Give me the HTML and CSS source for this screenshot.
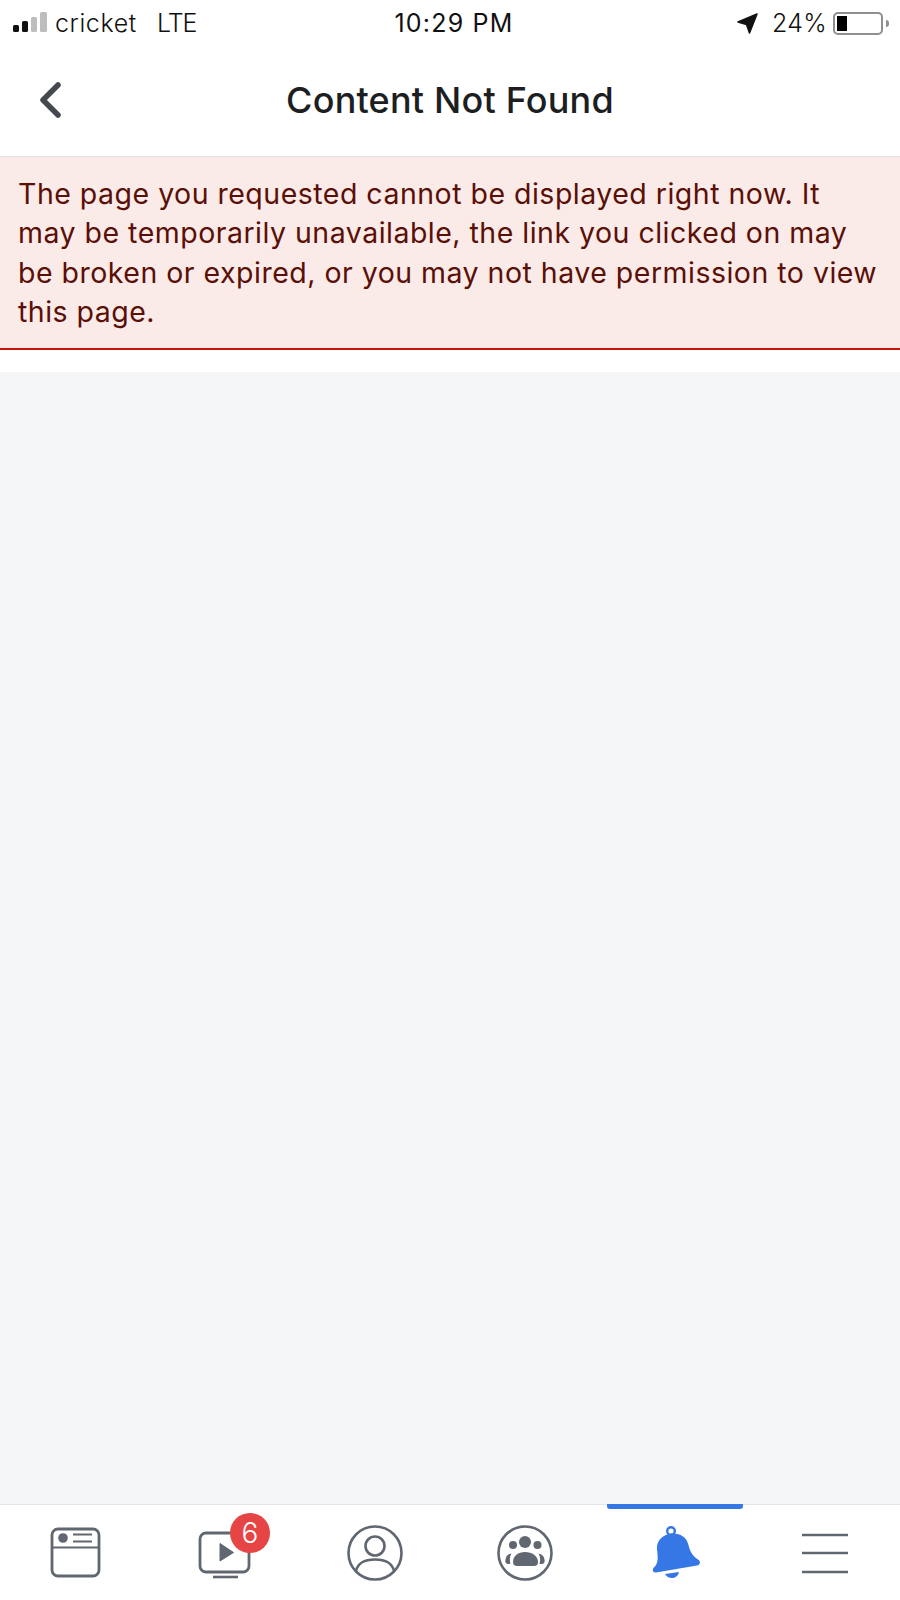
FILE: index.html
```html
<!DOCTYPE html>
<html>
<head>
    <meta http-equiv="Content-Type" content="text/html; charset=UTF-8">
    <title>Content Not Found</title>
    <link rel="stylesheet" href="styles.css">
</head>

<body>
<div id="page">
    <div class="status">
        <div class="status-left">
            <svg class="signal" width="36" height="26" viewBox="0 0 36 26">
                <rect x="0" y="15" width="6" height="7" rx="1.5" fill="#111"/>
                <rect x="9" y="11" width="6" height="11" rx="1.5" fill="#111"/>
                <rect x="18" y="7" width="6" height="15" rx="1.5" fill="#bdbdbd"/>
                <rect x="27" y="2" width="7" height="20" rx="1.5" fill="#bdbdbd"/>
            </svg>
            <span class="carrier">cricket</span>
            <span class="network">LTE</span>
        </div>
        <div class="clock">10:29 PM</div>
        <div class="status-right">
            <svg class="arrow" width="21" height="21" viewBox="0 0 21 21">
                <path d="M20 1 L1 9 L9.500 11.500 L12.500 20 Z" fill="#111" stroke="#111" stroke-width="1.500" stroke-linejoin="round"/>
            </svg>
            <span class="percent">24%</span>
            <div class="battery"><div class="battery-fill"></div></div>
            <div class="battery-nub"></div>
        </div>
    </div>

    <div class="nav">
        <a class="back">
            <svg width="24" height="36" viewBox="0 0 24 36">
                <path d="M20 3 L5 18 L20 33" fill="none" stroke="#444950" stroke-width="5.500" stroke-linecap="round" stroke-linejoin="round"/>
            </svg>
        </a>
        <div class="title">Content Not Found</div>
    </div>

    <div class="error">The page you requested cannot be displayed right now. It may be temporarily unavailable, the link you clicked on may be broken or expired, or you may not have permission to view this page.</div>

    <div class="gap"></div>
    <div class="content"></div>

    <div class="tabs">
        <div class="tab">
            <svg width="60" height="60" viewBox="0 0 60 60">
                <rect x="7" y="6" width="47" height="47" rx="6" fill="none" stroke="#606770" stroke-width="2.800"/>
                <path d="M7 24.500 H54" stroke="#606770" stroke-width="2.200"/>
                <circle cx="18" cy="15" r="4.800" fill="#606770"/>
                <path d="M28 11.500 H47 M28 18.500 H47" stroke="#606770" stroke-width="2.200"/>
            </svg>
        </div>
        <div class="tab">
            <svg width="60" height="60" viewBox="0 0 60 60">
                <rect x="5" y="10" width="49" height="39" rx="6" fill="none" stroke="#606770" stroke-width="2.800"/>
                <path d="M18 54 H43" stroke="#606770" stroke-width="2.600"/>
                <path d="M25 20.500 L38.500 29.500 L25 38 Z" fill="#606770" stroke="#606770" stroke-linejoin="round"/>
            </svg>
            <span class="badge">6</span>
        </div>
        <div class="tab">
            <svg width="60" height="60" viewBox="0 0 60 60">
                <circle cx="30" cy="30" r="26.500" fill="none" stroke="#606770" stroke-width="2.600"/>
                <circle cx="30" cy="23" r="9.500" fill="none" stroke="#606770" stroke-width="2.600"/>
                <path d="M11 48 C13 39 21 36.500 30 36.500 C39 36.500 47 39 49 48" fill="none" stroke="#606770" stroke-width="2.600"/>
            </svg>
        </div>
        <div class="tab">
            <svg width="60" height="60" viewBox="0 0 60 60">
                <circle cx="30" cy="30" r="26.500" fill="none" stroke="#606770" stroke-width="2.600"/>
                <circle cx="30" cy="19" r="6" fill="#606770"/>
                <circle cx="18" cy="22" r="4" fill="#606770"/>
                <circle cx="42.500" cy="22" r="4" fill="#606770"/>
                <path d="M18 39 C18 33 23 29 30 29 C37 29 43 33 43 39 C43 42 41 43 39 43 H22 C20 43 18 42 18 39 Z" fill="#606770"/>
                <path d="M15.500 41 C11 41 10 40 10.500 36.500 C11 33 13 31 16.500 30.500 C14.500 33.500 14.500 38 15.500 41 Z M44.500 41 C49 41 50 40 49.500 36.500 C49 33 47 31 43.500 30.500 C45.500 33.500 45.500 38 44.500 41 Z" fill="#606770"/>
            </svg>
        </div>
        <div class="tab tab-active">
            <svg width="60" height="60" viewBox="0 0 60 60">
                <path d="M10 43.500 C7 45.500 7 50 11 49.500 L52 42.500 C55.500 42 56 38 53 36.500 C48 33 45 29 43.500 22 C41.500 13 34 10 27 10.500 C18 11.500 11.500 17 12 26 C12.500 33 14 38 10 43.500 Z" fill="#3578e5"/>
                <circle cx="26" cy="8" r="3.800" fill="none" stroke="#3578e5" stroke-width="2.400"/>
                <path d="M20 51 L34 49 C32.500 56.500 23 57 20 51 Z" fill="#3578e5"/>
            </svg>
        </div>
        <div class="tab">
            <svg width="60" height="60" viewBox="0 0 60 60">
                <path d="M7 12 H53 M7 30 H53 M7 49 H53" stroke="#606770" stroke-width="2.600"/>
            </svg>
        </div>
    </div>
</div>
</body>
</html>
```

FILE: styles.css
```css
html, body {
  margin: 0;
  padding: 0;
}

body {
  background-color: #ffffff;
  font-family: Inter, "Liberation Sans", Arial, sans-serif;
}

#page {
  width: 900px;
  height: 1600px;
  display: flex;
  flex-direction: column;
  overflow: hidden;
}

/* phone status bar */
.status {
  height: 46px;
  display: grid;
  grid-template-columns: 1fr auto 1fr;
  align-items: center;
  padding: 0 11px 0 13px;
  font-size: 25px;
  color: #111111;
}

.status-left {
  display: flex;
  align-items: center;
}

.signal {
  margin-right: 6px;
}

.carrier {
  font-weight: 300;
  letter-spacing: 0.6px;
  width: 102px;
}

.network {
  font-weight: 300;
  letter-spacing: -1px;
}

.clock {
  font-weight: 400;
  letter-spacing: 1.2px;
  margin-left: 6px;
}

.status-right {
  display: flex;
  align-items: center;
  justify-content: flex-end;
}

.arrow {
  margin-right: 14px;
}

.percent {
  font-weight: 300;
  letter-spacing: 0.3px;
  margin-right: 6px;
}

.battery {
  width: 42px;
  height: 15px;
  border: 2px solid #8f8f8f;
  border-radius: 5px;
  padding: 2px;
}

.battery-fill {
  width: 10px;
  height: 100%;
  background-color: #000000;
}

.battery-nub {
  width: 3px;
  height: 7px;
  margin-left: 3px;
  background-color: #8f8f8f;
  border-radius: 0 3px 3px 0;
}

/* title row */
.nav {
  height: 107px;
  padding-bottom: 3px;
  position: relative;
  display: flex;
  align-items: center;
  justify-content: center;
  border-bottom: 1px solid #e4e1e0;
}

.back {
  position: absolute;
  left: 38px;
  top: 36px;
  display: block;
  line-height: 0;
}

.title {
  font-size: 36px;
  font-weight: 500;
  letter-spacing: 0.2px;
  color: #1c1e21;
}

.error {
  background-color: #fbebe8;
  border-bottom: 2px solid #c9140c;
  color: #5a0f07;
  font-size: 28.5px;
  letter-spacing: 0.49px;
  line-height: 39.3px;
  padding: 17px 18px 17px;
}

.gap {
  height: 22px;
}

.content {
  flex: 1;
  background-color: #f5f6f8;
}

/* bottom tabs */
.tabs {
  height: 95px;
  display: flex;
  border-top: 1px solid #e4e6e9;
  background-color: #ffffff;
}

.tab {
  flex: 1;
  position: relative;
  display: flex;
  align-items: center;
  justify-content: center;
}

.tab-active::before {
  content: "";
  position: absolute;
  left: 7px;
  right: 7px;
  top: -1px;
  height: 5px;
  background-color: #3578e5;
  border-radius: 0 0 3px 3px;
}

.badge {
  position: absolute;
  left: 80px;
  top: 8px;
  width: 40px;
  height: 40px;
  border-radius: 50%;
  background-color: #e64545;
  color: #ffffff;
  font-size: 28px;
  font-weight: 300;
  line-height: 40px;
  text-align: center;
}
```
